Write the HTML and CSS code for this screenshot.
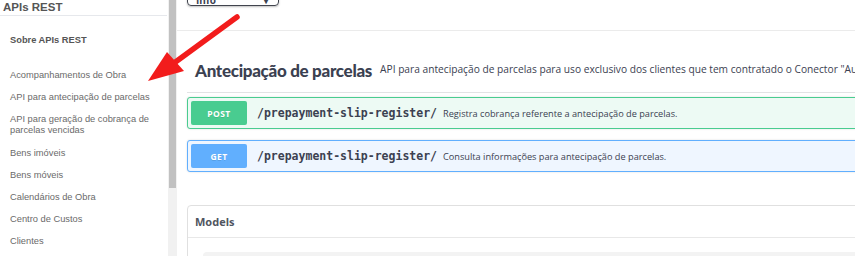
FILE: index.html
```html
<!DOCTYPE html>
<html lang="pt-BR">
<head>
<meta charset="utf-8">
<title>APIs REST</title>
<link rel="stylesheet" href="styles.css">
</head>
<body>
<div class="page">
  <aside class="sidebar">
    <div class="side-inner">
      <div class="side-title">APIs REST</div>
      <div class="side-about">Sobre APIs REST</div>
      <ul class="side-list">
        <li>Acompanhamentos de Obra</li>
        <li>API para antecipação de parcelas</li>
        <li>API para geração de cobrança de parcelas vencidas</li>
        <li>Bens imóveis</li>
        <li>Bens móveis</li>
        <li>Calendários de Obra</li>
        <li>Centro de Custos</li>
        <li>Clientes</li>
      </ul>
    </div>
    <div class="scrollbar"><div class="thumb"></div></div>
  </aside>
  <main class="main">
    <div class="topbar">
      <div class="select"><span>Info</span><span class="caret">▾</span></div>
    </div>
    <div class="content">
      <section class="tag">
        <h3 class="tag-title">
          <span class="tag-name">Antecipação de parcelas</span>
          <small class="tag-desc">API para antecipação de parcelas para uso exclusivo dos clientes que tem contratado o Conector "Autorização de cobrança"</small>
        </h3>
        <div class="opblock post">
          <span class="method">POST</span>
          <span class="path">/prepayment-slip-register/</span>
          <span class="desc">Registra cobrança referente a antecipação de parcelas.</span>
        </div>
        <div class="opblock get">
          <span class="method">GET</span>
          <span class="path">/prepayment-slip-register/</span>
          <span class="desc">Consulta informações para antecipação de parcelas.</span>
        </div>
      </section>
      <section class="models">
        <h4 class="models-title">Models</h4>
        <div class="models-body"><div class="model-box"></div></div>
      </section>
    </div>
  </main>
</div>
<svg class="annot" width="855" height="256" viewBox="0 0 855 256" aria-hidden="true">
  <line x1="237" y1="17" x2="170" y2="66" stroke="#f21c1c" stroke-width="5.5" stroke-linecap="round"/>
  <polygon points="148,81 167,52 184,71" fill="#f21c1c"/>
</svg>
</body>
</html>
```
FILE: styles.css
```css
html, body {
  margin: 0;
  padding: 0;
}
body {
  width: 855px;
  height: 256px;
  overflow: hidden;
  background: #fff;
  font-family: "Liberation Sans", Arial, sans-serif;
  position: relative;
}
.page {
  display: grid;
  grid-template-columns: 177px 1fr;
  height: 256px;
}
.sidebar {
  display: flex;
  height: 256px;
  overflow: hidden;
}
.side-inner {
  width: 168px;
}
.side-title {
  height: 15px;
  line-height: 15px;
  padding-left: 3px;
  font-size: 11.5px;
  font-weight: bold;
  color: #555;
  border-bottom: 1px solid #e6e8ec;
  margin-right: 1px;
}
.side-about {
  margin-top: 19px;
  padding-left: 10px;
  font-size: 9.3px;
  line-height: 11px;
  font-weight: bold;
  color: #555;
}
.side-list {
  list-style: none;
  margin: 19px 0 0;
  padding: 0 10px;
}
.side-list li {
  font-size: 9.3px;
  line-height: 11px;
  color: #6a6a6a;
  padding: 5.1px 0 6.1px;
  width: 140px;
}
.scrollbar {
  width: 9px;
  background: #f1f1f1;
  height: 256px;
}
.thumb {
  margin: 0 1px;
  height: 188px;
  background: #c1c1c1;
}
.main {
  overflow: hidden;
  min-width: 0;
}
.topbar {
  display: flex;
  align-items: flex-start;
  width: 900px;
  height: 30px;
  border-bottom: 1px solid #ebebeb;
}
.select {
  margin-left: 10px;
  margin-top: -14px;
  width: 72px;
  height: 18px;
  border: 1.5px solid #41444e;
  border-radius: 4px;
  box-shadow: 0 1px 2px rgba(0, 0, 0, .25);
  display: flex;
  align-items: center;
  justify-content: space-between;
  padding: 0 10px 0 8px;
  font-family: "Open Sans", sans-serif;
  font-weight: bold;
  font-size: 10px;
  color: #3b4151;
}
.select span {
  position: relative;
  top: 4px;
}
.caret {
  font-size: 8px;
}
.content {
  width: 900px;
  padding: 0 10px;
}
.tag-title {
  margin: 0;
  display: flex;
  align-items: center;
  padding: 29px 0 10px 8px;
  border-bottom: 1px solid #e2e3e5;
  white-space: nowrap;
}
.tag-name {
  font-family: Lato, "Open Sans", sans-serif;
  font-weight: 900;
  font-size: 17px;
  line-height: 22px;
  letter-spacing: -0.3px;
  color: #3b4151;
}
.tag-desc {
  margin-left: 8px;
  font-family: "Open Sans", sans-serif;
  font-weight: normal;
  font-size: 10.2px;
  color: #3b4151;
  position: relative;
  top: -2px;
}
.opblock {
  display: flex;
  align-items: center;
  padding: 3px;
  border: 1px solid;
  border-radius: 3px;
  margin-bottom: 11px;
  box-shadow: 0 0 2px rgba(0, 0, 0, .15);
  white-space: nowrap;
}
.opblock:first-of-type {
  margin-top: 4px;
}
.post {
  background: #edfaf4;
  border-color: #49cc90;
}
.get {
  background: #eff6ff;
  border-color: #61affe;
}
.method {
  width: 56px;
  height: 24px;
  border-radius: 2px;
  display: flex;
  align-items: center;
  justify-content: center;
  flex: none;
  color: #fff;
  font-family: "Open Sans", sans-serif;
  font-weight: bold;
  font-size: 8.5px;
  letter-spacing: 0.4px;
  text-shadow: 0 1px 0 rgba(0, 0, 0, .1);
}
.post .method {
  background: #49cc90;
}
.get .method {
  background: #61affe;
}
.path {
  margin-left: 10px;
  font-family: "DejaVu Sans Mono", "Liberation Mono", monospace;
  font-weight: bold;
  font-size: 11.5px;
  color: #3b4151;
}
.desc {
  margin-left: 6px;
  font-family: "Open Sans", sans-serif;
  font-size: 9.2px;
  color: #3b4151;
}
.models {
  margin-top: 33px;
  border: 1px solid #e0e0e0;
  border-radius: 4px;
}
.models-title {
  margin: 0;
  height: 31px;
  line-height: 31px;
  padding-left: 7px;
  font-family: "Open Sans", sans-serif;
  font-weight: bold;
  font-size: 11px;
  color: #505560;
  border-bottom: 1px solid #e8e8e8;
}
.models-body {
  padding: 14px 0 0 15px;
}
.model-box {
  height: 20px;
  background: #f3f3f3;
  border-radius: 4px 0 0 0;
}
.annot {
  position: absolute;
  left: 0;
  top: 0;
  pointer-events: none;
}
```
